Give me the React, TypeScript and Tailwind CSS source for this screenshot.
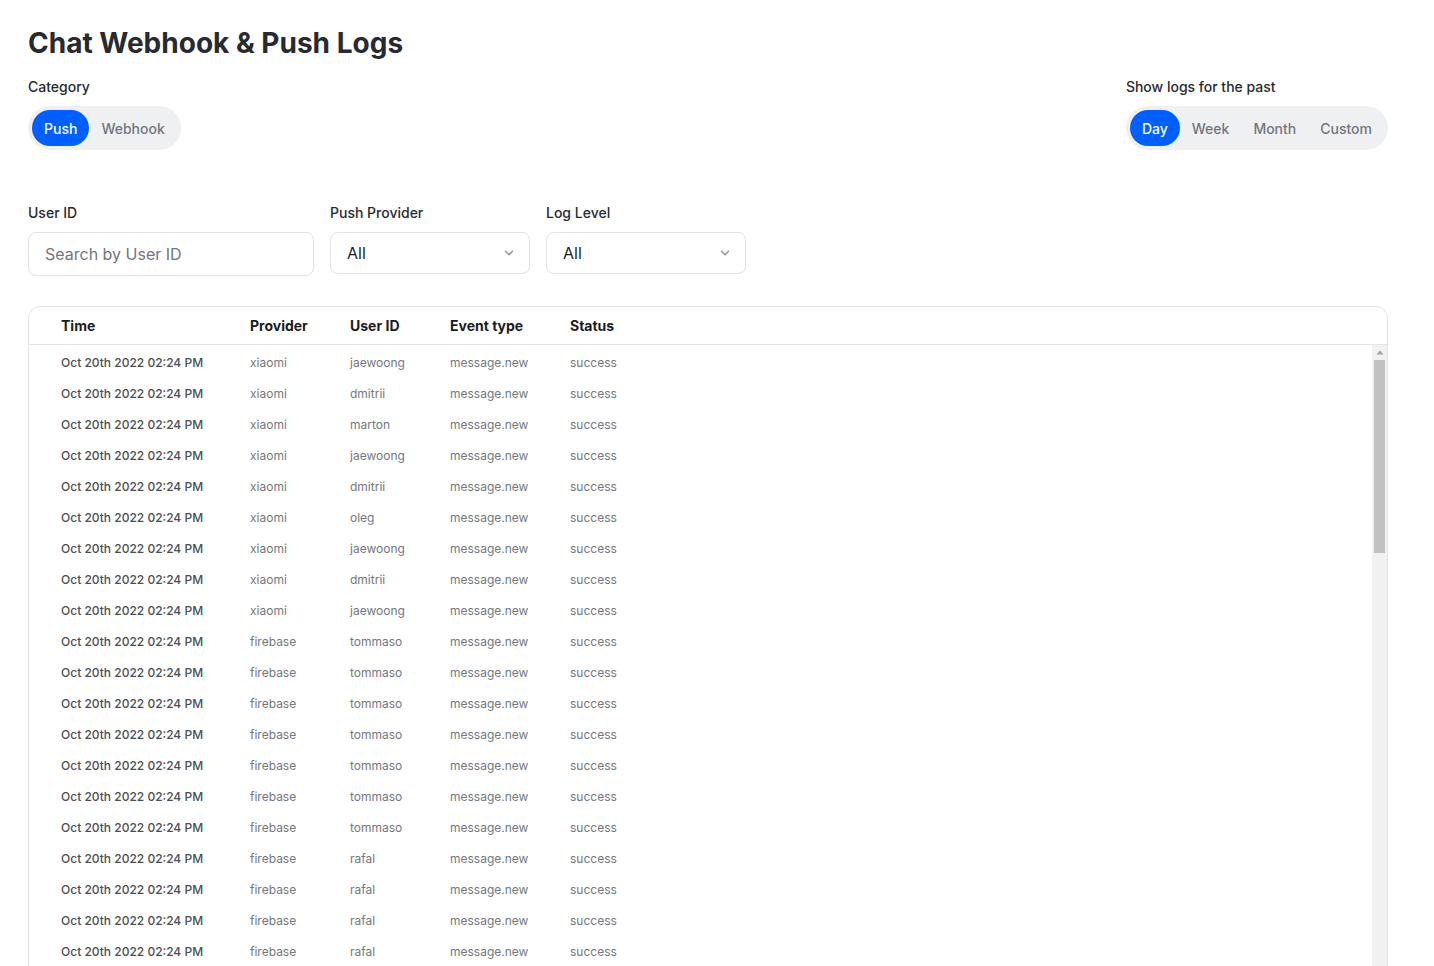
import { useState } from 'react'

type LogRow = { time: string; provider: string; userId: string; event: string; status: string }

const head: [string, string][] = [
  ['xiaomi', 'jaewoong'], ['xiaomi', 'dmitrii'], ['xiaomi', 'marton'],
  ['xiaomi', 'jaewoong'], ['xiaomi', 'dmitrii'], ['xiaomi', 'oleg'],
  ['xiaomi', 'jaewoong'], ['xiaomi', 'dmitrii'], ['xiaomi', 'jaewoong'],
  ['firebase', 'tommaso'], ['firebase', 'tommaso'], ['firebase', 'tommaso'],
  ['firebase', 'tommaso'], ['firebase', 'tommaso'], ['firebase', 'tommaso'],
  ['firebase', 'tommaso'], ['firebase', 'rafal'], ['firebase', 'rafal'],
  ['firebase', 'rafal'], ['firebase', 'rafal'],
]

// Repeat the pattern so the list is long like the real one
const rows: LogRow[] = Array.from({ length: 103 }, (_, i) => {
  const [provider, userId] = head[i % head.length]
  return { time: 'Oct 20th 2022 02:24 PM', provider, userId, event: 'message.new', status: 'success' }
})

function Segmented({ options, value, onChange }: { options: string[]; value: string; onChange: (v: string) => void }) {
  return (
    <div className="inline-flex h-11 items-center rounded-full bg-[#eff0f2] p-1">
      {options.map(o => (
        <button
          key={o}
          onClick={() => onChange(o)}
          className={
            o === value
              ? 'h-9 rounded-full bg-[#005fff] px-3 text-[14px] font-medium text-white'
              : 'h-9 rounded-full px-3 text-[14px] font-medium text-[#72767e]'
          }
        >
          {o}
        </button>
      ))}
    </div>
  )
}

function Select({ value }: { value: string }) {
  return (
    <div className="flex h-[42px] w-[200px] items-center justify-between rounded-lg border border-[#e1e3e6] bg-white pl-4 pr-[15px]">
      <span className="text-[16px] text-[#1d1f23]">{value}</span>
      <svg width="10" height="6" viewBox="0 0 10 6" fill="none" stroke="#8b8f96" strokeWidth="1.4" strokeLinecap="round" strokeLinejoin="round">
        <path d="M1.5 1.2l3.5 3.5 3.5-3.5" />
      </svg>
    </div>
  )
}

export default function App() {
  const [category, setCategory] = useState('Push')
  const [range, setRange] = useState('Day')

  return (
    <div className="h-screen overflow-hidden bg-white font-['Inter',sans-serif] text-[#2b2b2b]">
      <div className="ml-7 w-[1360px] pt-[25px]">
        <h1 className="text-[28px] font-bold leading-9 text-[#272a30]">Chat Webhook &amp; Push Logs</h1>

        <div className="mt-[16px] flex items-start justify-between">
          <div className="flex flex-col gap-[9px]">
            <span className="text-[14px] leading-5 font-medium text-[#272a30]">Category</span>
            <Segmented options={['Push', 'Webhook']} value={category} onChange={setCategory} />
          </div>
          <div className="flex flex-col gap-[9px]">
            <span className="text-[14px] leading-5 font-medium text-[#272a30]">Show logs for the past</span>
            <Segmented options={['Day', 'Week', 'Month', 'Custom']} value={range} onChange={setRange} />
          </div>
        </div>

        {/* ── Filters ─────────────────────────────────────────── */}
        <div className="mt-[53px] flex gap-4">
          <div className="flex flex-col gap-[9px]">
            <span className="text-[14px] leading-5 font-medium text-[#272a30]">User ID</span>
            <input
              placeholder="Search by User ID"
              className="h-11 w-[286px] rounded-lg border border-[#e1e3e6] px-4 text-[16px] text-[#1d1f23] placeholder:text-[#72767e] outline-none"
            />
          </div>
          <div className="flex flex-col gap-[9px]">
            <span className="text-[14px] leading-5 font-medium text-[#272a30]">Push Provider</span>
            <Select value="All" />
          </div>
          <div className="flex flex-col gap-[9px]">
            <span className="text-[14px] leading-5 font-medium text-[#272a30]">Log Level</span>
            <Select value="All" />
          </div>
        </div>

        {/* ── Log table ───────────────────────────────────────── */}
        <div className="mt-[30px] rounded-xl border border-[#e3e4e6] bg-white">
          <div className="grid h-[38px] grid-cols-[189px_100px_100px_120px_1fr] items-center border-b border-[#e3e4e6] pl-8 text-[14px] font-bold text-[#1b1c1f]">
            <span>Time</span>
            <span>Provider</span>
            <span>User ID</span>
            <span>Event type</span>
            <span>Status</span>
          </div>
          <div className="flex h-[800px]">
            <div className="flex-1 overflow-hidden pt-[2px]">
              {rows.map((r, i) => (
                <div key={i} className="grid h-[31px] grid-cols-[189px_100px_100px_120px_1fr] items-center pl-8 text-[12px] text-[#74777d]">
                  <span className="font-medium text-[#4b4e53]">{r.time}</span>
                  <span>{r.provider}</span>
                  <span>{r.userId}</span>
                  <span>{r.event}</span>
                  <span>{r.status}</span>
                </div>
              ))}
            </div>
            {/* scrollbar, drawn since the list is clipped */}
            <div className="flex w-[15px] flex-col bg-[#f1f1f1]">
              <div className="flex h-[15px] items-center justify-center">
                <svg width="8" height="5" viewBox="0 0 8 5"><path d="M4 0.5L7.5 4.5H0.5Z" fill="#a3a3a3" /></svg>
              </div>
              <div className="mx-[2px] h-[193px] bg-[#c1c1c1]" />
            </div>
          </div>
        </div>
      </div>
    </div>
  )
}
